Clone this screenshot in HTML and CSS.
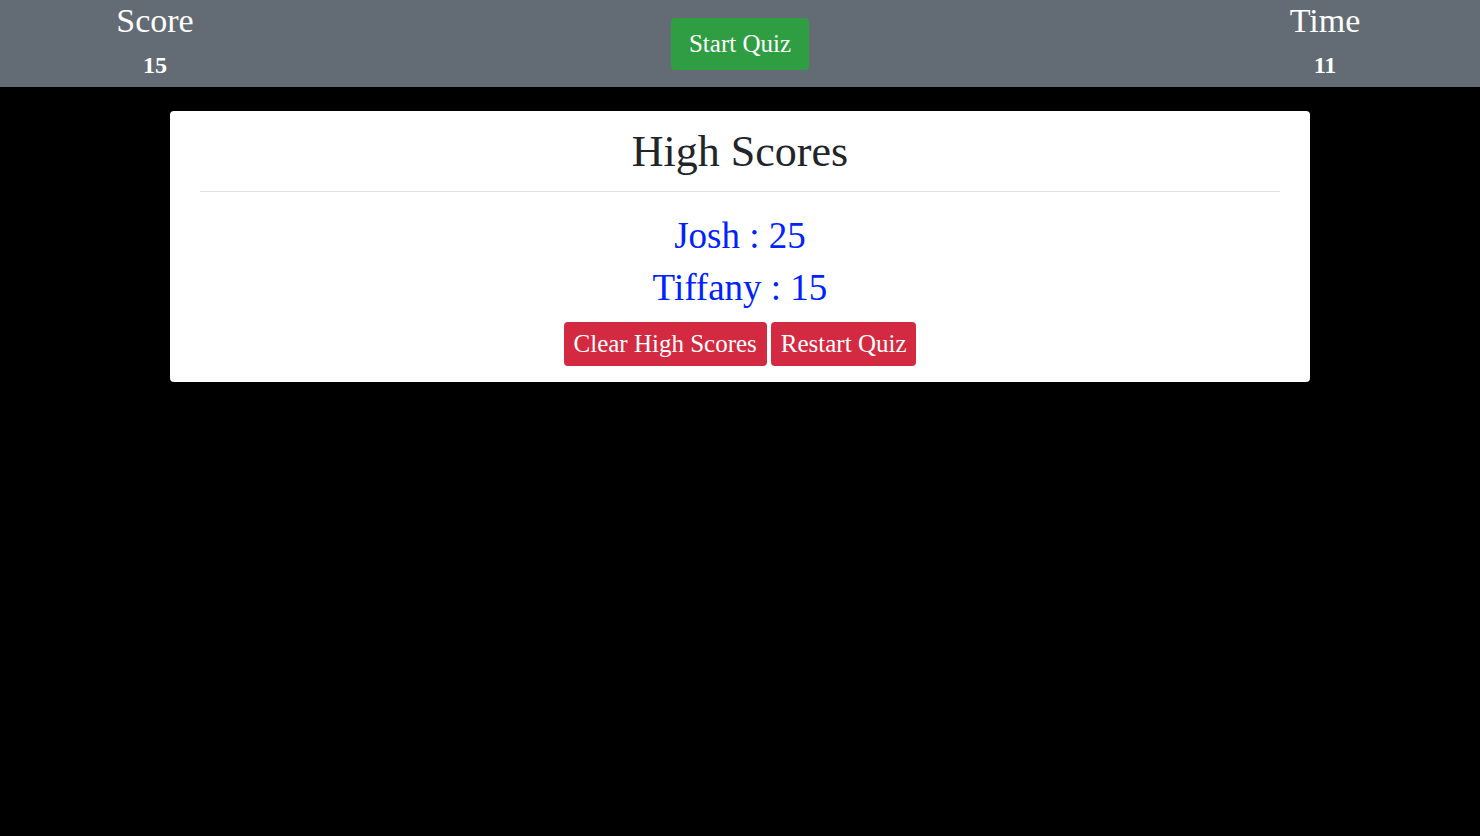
FILE: index.html
```html
<!DOCTYPE html>
<html>
<head>
<meta charset="utf-8">
<link rel="stylesheet" href="styles.css">
</head>
<body>
<header class="topbar">
  <div class="stat">
    <div class="stat-label">Score</div>
    <div class="stat-value">15</div>
  </div>
  <div class="start-wrap">
    <button class="btn btn-start">Start Quiz</button>
  </div>
  <div class="stat">
    <div class="stat-label">Time</div>
    <div class="stat-value">11</div>
  </div>
</header>
<main class="container">
  <section class="card">
    <h1 class="card-title">High Scores</h1>
    <hr class="divider">
    <ul class="scores">
      <li>Josh : 25</li>
      <li>Tiffany : 15</li>
    </ul>
    <div class="actions">
      <button class="btn btn-danger">Clear High Scores</button>
      <button class="btn btn-danger">Restart Quiz</button>
    </div>
  </section>
</main>
</body>
</html>
```
FILE: styles.css
```css
* { box-sizing: border-box; }
html, body {
  margin: 0;
  padding: 0;
  background: #000;
  font-family: "Liberation Serif", "DejaVu Serif", serif;
}
.topbar {
  height: 87px;
  background: #636b74;
  display: grid;
  grid-template-columns: 310px 1fr 310px;
  align-items: start;
  color: #fff;
}
.stat {
  display: flex;
  flex-direction: column;
  align-items: center;
}
.stat-label {
  font-size: 34px;
  line-height: 40px;
  margin-top: 1px;
}
.stat-value {
  font-size: 24px;
  font-weight: bold;
  line-height: 30px;
  margin-top: 9px;
}
.start-wrap {
  display: flex;
  justify-content: center;
  padding-top: 18px;
}
.btn {
  font-family: inherit;
  color: #fff;
  border: none;
  border-radius: 4px;
  cursor: pointer;
}
.btn-start {
  background: #2f9e43;
  font-size: 25px;
  height: 52px;
  width: 138px;
  padding: 0 0 1px;
}
.container {
  width: 1140px;
  margin: 24px auto 0;
}
.card {
  background: #fff;
  border-radius: 4px;
  padding: 16px 30px 16px;
  text-align: center;
}
.card-title {
  margin: 0;
  font-weight: normal;
  font-size: 44px;
  line-height: 50px;
  color: #212529;
}
.divider {
  border: none;
  border-top: 1px solid #e2e2e2;
  margin: 14px 0 18px;
}
.scores {
  list-style: none;
  margin: 0;
  padding: 0;
  color: #0022ff;
  font-size: 37px;
  line-height: 52px;
}
.actions {
  display: flex;
  justify-content: center;
  gap: 4px;
  margin-top: 8px;
}
.btn-danger {
  background: #d42a41;
  font-size: 25px;
  height: 44px;
  padding: 0 10px;
}
```
